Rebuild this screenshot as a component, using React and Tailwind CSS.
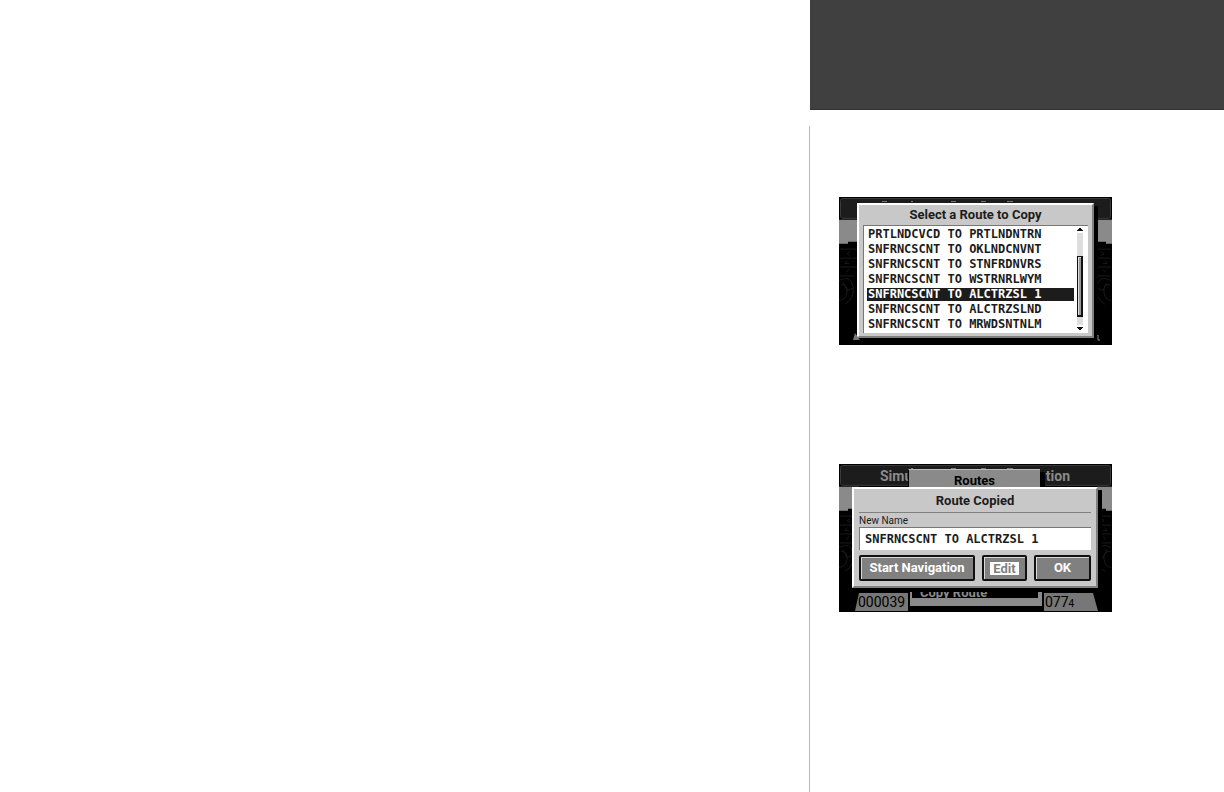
import { useState } from "react";

const routes = [
  "PRTLNDCVCD TO PRTLNDNTRN",
  "SNFRNCSCNT TO OKLNDCNVNT",
  "SNFRNCSCNT TO STNFRDNVRS",
  "SNFRNCSCNT TO WSTRNRLWYM",
  "SNFRNCSCNT TO ALCTRZSL 1",
  "SNFRNCSCNT TO ALCTRZSLND",
  "SNFRNCSCNT TO MRWDSNTNLM",
];

function Backdrop() {
  return (
    <svg
      className="absolute inset-0 h-full w-full"
      viewBox="0 0 273 149"
      preserveAspectRatio="none"
      aria-hidden="true"
    >
      <rect width="273" height="149" fill="#000" />
      <rect x="1.5" y="1.5" width="270" height="20" rx="2" fill="#1c1c1c" stroke="#3a3a3a" />
      <path d="M72 4.5h2M112 4.5h5M142 4.5h5M168 4.5h6" stroke="#777" />
      <path d="M0 23h20v22H9v2H0zM258 23h15v24h-6v-2h-9z" fill="#8a8a8a" />
      <g stroke="#1a1a1a" fill="none">
        <path d="M1 52.5h17M1 61.5h17M1 70.5h17M1 79.5h14M259 52.5h13M259 61.5h13M259 70.5h13M259 79.5h13" />
        <path d="M11 55l-3 2 3 2M8 64l-2 3h4M10 73l-3 3M262 55l3 2-3 2M266 64l2 3h-4M264 73l3 3" />
        <path d="M0 84q12-6 14 6t-8 18M2 88q7 0 6 8t-8 8M4 86l4 8M14 92l-6 2" />
        <path d="M272 84q-12-6-14 6t8 18M271 88q-7 0-6 8t7 8M268 86l-4 8M258 92l6 2" />
      </g>
    </svg>
  );
}

function Screen({ children, label }) {
  return (
    <section
      aria-label={label}
      className="relative w-[273px] overflow-hidden bg-black font-['Roboto',sans-serif] text-[13px] font-bold text-[#1c1c1c]"
    >
      <Backdrop />
      {children}
    </section>
  );
}

function ScreenButton({ children, className }) {
  return (
    <button
      className={
        "flex h-[26px] items-center justify-center rounded-xs border-2 border-[#111] bg-[#808080] whitespace-nowrap text-white shadow-[inset_1px_1px_0_#d8d8d8] " +
        className
      }
    >
      {children}
    </button>
  );
}

function SelectRoute() {
  const [selected, setSelected] = useState(4);

  return (
    <Screen label="Select a Route to Copy">
      <svg className="absolute top-1 left-[43px]" width="5" height="1" aria-hidden="true">
        <rect width="5" height="1" fill="#777" />
      </svg>
      <div className="relative mx-[18px] mt-[6px] mb-[7px] border-2 border-t-white border-r-[#808080] border-b-[#808080] border-l-white bg-[#c8c8c8] px-1 pb-[3px] shadow-[4px_3px_0_#000]">
        <h2 className="h-5 text-center leading-[20px]">Select a Route to Copy</h2>
        <div className="flex justify-between border-t border-l border-[#777] bg-white pt-px pr-1 pb-px pl-[3px]">
          <ul
            role="listbox"
            aria-label="Routes"
            className="w-[207px] font-['DejaVu_Sans_Mono',monospace] text-[12px]"
          >
            {routes.map((route, i) => (
              <li
                key={route}
                role="option"
                aria-selected={i === selected}
                onClick={() => setSelected(i)}
                className="flex h-[15px] items-center"
              >
                <span
                  className={
                    "w-full px-px leading-[13px] whitespace-nowrap " +
                    (i === selected ? "bg-[#1c1c1c] text-white" : "")
                  }
                >
                  {route}
                </span>
              </li>
            ))}
          </ul>
          <svg width="8" height="105" viewBox="0 0 8 105" shapeRendering="crispEdges" aria-hidden="true">
            <rect x="1" y="6" width="6" height="92" fill="#ddd" />
            <path d="M4 0L7 4H1zM1 100h6L4 104z" fill="#111" />
            <rect x="1" y="29" width="6" height="61" fill="#111" />
            <rect x="2" y="30" width="3" height="58" fill="#999" />
            <path d="M2 88V30h3" stroke="#ddd" fill="none" />
          </svg>
        </div>
      </div>
      <svg className="absolute bottom-1 left-[14px]" width="7" height="8" aria-hidden="true">
        <path d="M2 0L7 7H0z" fill="#777" />
      </svg>
      <svg className="absolute right-3 bottom-1" width="3" height="6" aria-hidden="true">
        <path d="M0 0h1v5h2" stroke="#888" fill="none" />
      </svg>
    </Screen>
  );
}

function RouteCopied() {
  return (
    <Screen label="Route Copied">
      <span className="absolute top-px left-[41px] text-[14px] leading-[22px] text-[#8a8a8a]">Simu</span>
      <span className="absolute top-px right-[42px] text-[14px] leading-[22px] text-[#8a8a8a]">tion</span>
      <div className="absolute top-[5px] left-[69px] h-[24px] w-[132px] border-t border-l border-t-[#bbb] border-l-black bg-[#8a8a8a] text-center leading-[22px] text-black shadow-[5px_3px_0_#000]">
        Routes
      </div>

      <div className="relative mt-[23px] mr-[14px] ml-[13px] border-2 border-t-white border-r-[#808080] border-b-[#808080] border-l-white bg-[#c8c8c8] px-[5px] pb-[5px] shadow-[4px_3px_0_#000]">
        <h2 className="h-6 border-b border-[#808080] text-center leading-[24px]">Route Copied</h2>
        <label htmlFor="route-name" className="block h-[14px] text-[10px] leading-[16px] font-normal">
          New Name
        </label>
        <input
          id="route-name"
          defaultValue="SNFRNCSCNT TO ALCTRZSL 1"
          className="block h-[23px] w-full border-t border-l border-[#777] bg-white px-[5px] font-['DejaVu_Sans_Mono',monospace] text-[12px] font-bold outline-none"
        />
        <div className="mt-[5px] flex gap-[7px]">
          <ScreenButton className="w-[116px]">Start Navigation</ScreenButton>
          <ScreenButton className="w-[45px]">
            <span className="bg-white px-[3px] leading-[13px] text-[#808080]">Edit</span>
          </ScreenButton>
          <ScreenButton className="flex-1">OK</ScreenButton>
        </div>
      </div>

      <div className="relative flex h-[24px] items-start justify-between pt-[4px] pr-[14px] pl-[16px] text-black">
        <div className="mt-px h-[18px] w-[53px] bg-[#777] pl-[3px] text-[14px] leading-[18px] font-normal [clip-path:polygon(4px_0,100%_0,100%_100%,0_100%)]">
          000039
        </div>
        <div className="h-[14px] w-[132px] overflow-hidden border-r-4 border-b-8 border-l-2 border-[#8a8a8a] bg-black pl-2 leading-[2px] text-[#8a8a8a]">
          Copy Route
        </div>
        <div className="mt-px h-[18px] w-[54px] bg-[#777] pl-px text-[14px] leading-[18px] font-normal [clip-path:polygon(0_0,calc(100%-5px)_0,100%_100%,0_100%)]">
          077<span className="text-[10px]">4</span>
        </div>
      </div>
    </Screen>
  );
}

export default function App() {
  return (
    <div className="grid min-h-screen grid-cols-[809fr_415fr] bg-white">
      <main />
      <aside className="flex flex-col">
        <header className="ml-px h-[110px] border-b border-[#333] bg-[#404040]" />
        <div className="mt-4 flex flex-1 flex-col gap-[119px] border-l border-[#b8b8b8] pt-[71px] pl-[29px]">
          <SelectRoute />
          <RouteCopied />
        </div>
      </aside>
    </div>
  );
}
